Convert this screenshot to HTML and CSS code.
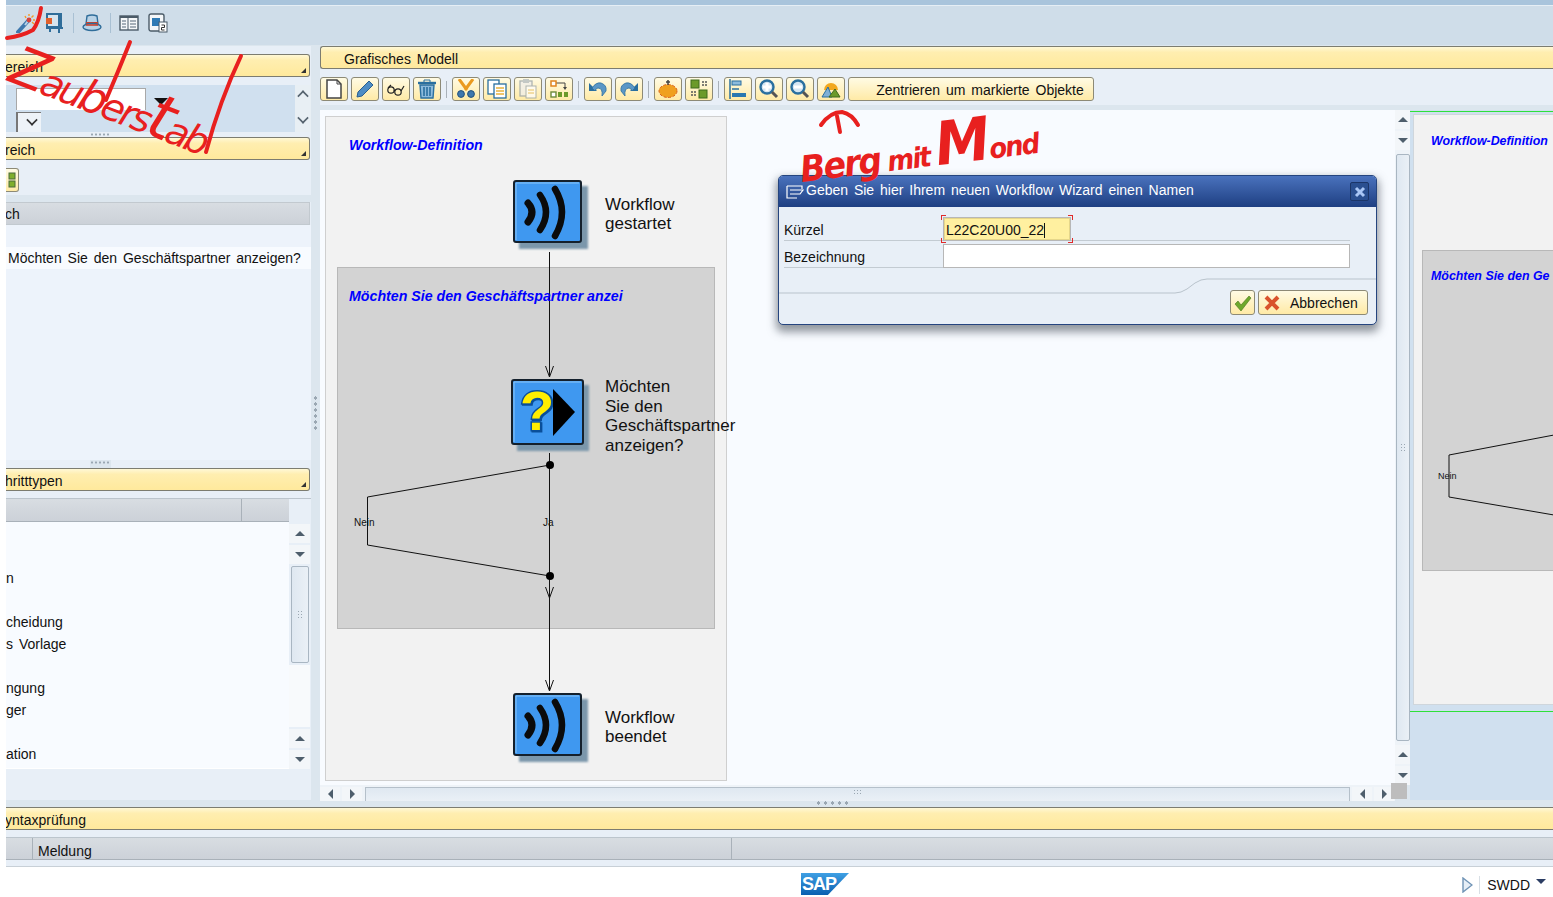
FILE: index.html
```html
<!DOCTYPE html>
<html lang="de">
<head>
    <meta charset="UTF-8">
    <title>SWDD</title>
    <link rel="stylesheet" href="styles.css">
</head>
<body>
<div class="app">
    <div class="top-strip"></div>

    <!-- System toolbar -->
    <div class="sys-toolbar">
        <svg class="sys-icon" viewBox="0 0 20 20"><path d="M2 19 L12 8" stroke="#3f78ad" stroke-width="4" stroke-linecap="round"/><path d="M9 12 L12 8" stroke="#b9d2e6" stroke-width="2"/><circle cx="13" cy="7" r="2.4" fill="#d8423a"/><path d="M13 1v2M19 7h-2M17.5 2.5l-2 2M18 11l-2-2M9 3l1 2" stroke="#f39a2a" stroke-width="1.4"/></svg>
        <svg class="sys-icon" viewBox="0 0 20 20"><rect x="2" y="1" width="14" height="13" fill="#d7e4ee" stroke="#2f6d9a" stroke-width="2"/><rect x="1" y="5" width="6" height="6" fill="#e0602c"/><path d="M1 15h17M14 1v19M5 15v4" stroke="#2f6d9a" stroke-width="2"/></svg>
        <span class="sys-sep"></span>
        <svg class="sys-icon" viewBox="0 0 20 20"><path d="M5 3 Q10 1 15 3 L16 11 H4Z" fill="#b9d2e6" stroke="#2f6d9a" stroke-width="1.4"/><path d="M4 9h12v2H4z" fill="#c9422f"/><ellipse cx="10" cy="14" rx="9" ry="3.5" fill="#b9d2e6" stroke="#2f6d9a" stroke-width="1.4"/><path d="M4 12h12" stroke="#c9422f" stroke-width="1.6"/></svg>
        <span class="sys-sep"></span>
        <svg class="sys-icon" viewBox="0 0 20 20"><rect x="1" y="3" width="18" height="14" fill="#f5f7f9" stroke="#4b5b68" stroke-width="1.4"/><path d="M1 4h18" stroke="#4b5b68" stroke-width="2"/><path d="M9 4v13" stroke="#4b5b68"/><path d="M3 8h4M3 11h4M3 14h4M11 8h6M11 11h6M11 14h6" stroke="#8a98a4" stroke-width="1.4"/></svg>
        <svg class="sys-icon" viewBox="0 0 20 20"><rect x="1" y="1" width="15" height="17" rx="2" fill="#f5f7f9" stroke="#4b5b68" stroke-width="1.4"/><rect x="4" y="5" width="8" height="8" fill="#2f7ab5"/><rect x="11" y="9" width="8" height="10" fill="#fff" stroke="#4b5b68"/><path d="M13.5 12h3v2.5h-3v2.5h3" fill="none" stroke="#333"/></svg>
    </div>

    <div class="workspace">
        <!-- Left column -->
        <div class="left-pane">
            <div class="ybar left-bar first-bar"><span class="clip-text">ereich</span><i class="corner"></i></div>
            <div class="filter-row">
                <div class="filter-fields">
                    <div class="filter-top"><span class="filter-input"></span><i class="tri-down"></i></div>
                    <span class="filter-drop"><i class="chev"></i></span>
                </div>
                <div class="filter-scroll"><i class="chev-up"></i><i class="chev"></i></div>
            </div>
            <div class="grip"></div>
            <div class="ybar left-bar"><span class="clip-text">reich</span><i class="corner"></i></div>
            <div class="btn-row">
                <span class="tool-btn narrow"><svg viewBox="0 0 12 20" width="12" height="20"><rect x="3" y="3" width="6" height="6" fill="#7fae2c" stroke="#4b6b3a"/><rect x="3" y="11" width="6" height="6" fill="#7fae2c" stroke="#4b6b3a"/></svg></span>
            </div>
            <div class="band-thin"></div>
            <div class="ghead left-head"><span class="clip-text">ch</span></div>
            <div class="tree">
                <div class="tree-row">Möchten Sie den Geschäftspartner anzeigen?</div>
            </div>
            <div class="grip grip-low"></div>
            <div class="ybar left-bar"><span class="clip-text">hritttypen</span><i class="corner"></i></div>
            <div class="steps">
                <div class="steps-main">
                    <div class="ghead steps-head"><span class="steps-col"></span></div>
                    <div class="steps-list">
                        <div class="step"></div>
                        <div class="step"></div>
                        <div class="step">n</div>
                        <div class="step"></div>
                        <div class="step">cheidung</div>
                        <div class="step">s Vorlage</div>
                        <div class="step"></div>
                        <div class="step">ngung</div>
                        <div class="step">ger</div>
                        <div class="step"></div>
                        <div class="step">ation</div>
                    </div>
                </div>
                <div class="vscroll steps-scroll">
                    <span class="sb"><i class="a-up"></i></span>
                    <span class="sb"><i class="a-down"></i></span>
                    <span class="thumb steps-thumb"><i class="thumb-dots"></i></span>
                    <span class="track"></span>
                    <span class="sb"><i class="a-up"></i></span>
                    <span class="sb"><i class="a-down"></i></span>
                </div>
            </div>
        </div>

        <div class="splitter"><i class="split-dots"></i></div>

        <!-- Graphical model -->
        <div class="right-pane">
            <div class="ybar model-bar">Grafisches Modell</div>
            <div class="model-toolbar">
                <span class="tool-btn"><svg viewBox="0 0 20 20"><path d="M3 1h10l4 4v14H3z" fill="#fff" stroke="#444" stroke-width="1.5"/><path d="M13 1v4h4" fill="none" stroke="#444"/></svg></span>
                <span class="tool-btn"><svg viewBox="0 0 20 20"><path d="M14 2l4 4L7 17l-5 1 1-5z" fill="#4d8cc4" stroke="#2a5f8f"/></svg></span>
                <span class="tool-btn"><svg viewBox="0 0 20 20"><circle cx="5" cy="11" r="3.2" fill="none" stroke="#222" stroke-width="1.2"/><circle cx="12" cy="13" r="3.2" fill="none" stroke="#222" stroke-width="1.2"/><path d="M8 11l1 1M15 12l3-5M2 9l3-3" fill="none" stroke="#222" stroke-width="1.2"/></svg></span>
                <span class="tool-btn"><svg viewBox="0 0 20 20"><path d="M1 4h18" stroke="#2a6f9f" stroke-width="2.4"/><path d="M7 3V1h6v2" fill="none" stroke="#2a6f9f"/><path d="M3 6h14l-1 13H4z" fill="#8dbbdc" stroke="#2a6f9f" stroke-width="1.4"/><path d="M7 8v9M10 8v9M13 8v9" stroke="#2a6f9f" stroke-width="1.6"/></svg></span>
                <span class="tool-sep"></span>
                <span class="tool-btn"><svg viewBox="0 0 20 20"><path d="M3 0l8 11M17 0L9 11" stroke="#eb9a1f" stroke-width="3"/><circle cx="5" cy="15" r="3.4" fill="#3f78ad" stroke="#24527c"/><circle cx="15" cy="15" r="3.4" fill="#3f78ad" stroke="#24527c"/></svg></span>
                <span class="tool-btn"><svg viewBox="0 0 20 20"><rect x="1" y="1" width="11" height="14" fill="#fff" stroke="#2a6f9f" stroke-width="1.3"/><rect x="7" y="5" width="12" height="14" fill="#fff" stroke="#2a6f9f" stroke-width="1.3"/><path d="M9 9h8M9 12h8M9 15h8" stroke="#e9b33c" stroke-width="1.3"/></svg></span>
                <span class="tool-btn faded"><svg viewBox="0 0 20 20"><rect x="2" y="2" width="12" height="15" fill="#eee" stroke="#8c99a3" stroke-width="1.3"/><rect x="5" y="0" width="6" height="4" fill="#aab5bd"/><rect x="8" y="7" width="10" height="12" fill="#fff" stroke="#8c99a3"/><path d="M10 11h6M10 14h6" stroke="#e9c97c" stroke-width="1.3"/></svg></span>
                <span class="tool-btn"><svg viewBox="0 0 20 20"><path d="M7 4h9v4" fill="none" stroke="#444"/><path d="M14 8l2 3 2-3z" fill="#444"/><rect x="2" y="2" width="5" height="5" fill="#fff" stroke="#e0841e" stroke-width="1.5"/><rect x="2" y="13" width="5" height="5" fill="#fff" stroke="#6c8a3a" stroke-width="1.4"/><rect x="9" y="13" width="4" height="5" fill="#6c9a2a"/><rect x="15" y="13" width="4" height="5" fill="#6c9a2a"/></svg></span>
                <span class="tool-sep"></span>
                <span class="tool-btn"><svg viewBox="0 0 20 20"><path d="M1 4v8h8z" fill="#2a6f9f"/><path d="M4 9 Q8 3 13 4 Q19 6 18 12 L14 17 Q15 9 10 9 Q8 9 7 12z" fill="#5b97c6" stroke="#2a6f9f" stroke-width=".8"/></svg></span>
                <span class="tool-btn"><svg viewBox="0 0 20 20"><path d="M19 4v8h-8z" fill="#2a6f9f"/><path d="M16 9 Q12 3 7 4 Q1 6 2 12 L6 17 Q5 9 10 9 Q12 9 13 12z" fill="#5b97c6" stroke="#2a6f9f" stroke-width=".8"/></svg></span>
                <span class="tool-sep"></span>
                <span class="tool-btn"><svg viewBox="0 0 20 20"><ellipse cx="10" cy="12" rx="9" ry="6.5" fill="#f0a01e" stroke="#d9601c" stroke-dasharray="3 1.5"/><path d="M10 1v5M8 3h4" stroke="#444" stroke-width="1.5"/></svg></span>
                <span class="tool-btn"><svg viewBox="0 0 20 20"><rect x="2" y="1" width="8" height="8" fill="#6c9a2a" stroke="#3f6a1c"/><rect x="10" y="11" width="8" height="8" fill="#6c9a2a" stroke="#3f6a1c"/><path d="M13 3h5M13 6h5M2 13h5M2 16h5" stroke="#555" stroke-width="1.3" stroke-dasharray="2 1"/></svg></span>
                <span class="tool-sep"></span>
                <span class="tool-btn"><svg viewBox="0 0 20 20"><path d="M2 0v20" stroke="#2a6f9f" stroke-width="1.5"/><rect x="4" y="2" width="9" height="4" fill="#8dbbdc" stroke="#2a6f9f"/><path d="M4 10h7" stroke="#2a6f9f" stroke-width="1.5"/><rect x="4" y="14" width="14" height="4" fill="#2a78b0"/></svg></span>
                <span class="tool-btn"><svg viewBox="0 0 20 20"><circle cx="8" cy="8" r="6.5" fill="#d5e6f3" stroke="#2a6f9f" stroke-width="2.4"/><path d="M4 8h8M8 4v8" stroke="#fff" stroke-width="3"/><path d="M13 13l5 5" stroke="#555" stroke-width="3"/></svg></span>
                <span class="tool-btn"><svg viewBox="0 0 20 20"><circle cx="8" cy="8" r="6.5" fill="#d5e6f3" stroke="#2a6f9f" stroke-width="2.4"/><path d="M4 8h8" stroke="#fff" stroke-width="3"/><path d="M13 13l5 5" stroke="#555" stroke-width="3"/></svg></span>
                <span class="tool-btn"><svg viewBox="0 0 20 20"><path d="M3 11a7 7 0 0 1 14 0z" fill="#f2a81e"/><path d="M1 18l6-10 4 10z" fill="#7fb0d6" stroke="#2a6f9f"/><path d="M8 18l6-8 5 8z" fill="#6c9a2a" stroke="#3f6a1c"/></svg></span>
                <span class="tool-btn text-btn">Zentrieren um markierte Objekte</span>
            </div>
            <div class="band"></div>

            <div class="model-body">
                <div class="canvas-col">
                    <div class="canvas">
                        <div class="diagram">
                            <div class="loop-box"></div>
                            <svg class="diagram-lines" viewBox="325 116 402 665">
                                <defs>
                                    <g id="sound-node">
                                        <rect class="node-shadow" x="6" y="6" width="69" height="63"/>
                                        <rect x="1" y="1" width="67" height="61" rx="2" fill="#3f98f0" stroke="#14202c" stroke-width="2"/>
                                        <path d="M3 3h63M3 3v57" stroke="#8cc6f7"/>
                                        <path d="M15 23 Q23 32 15 42" fill="none" stroke="#0b0b0b" stroke-width="7" stroke-linecap="round"/>
                                        <path d="M27 15 Q39 32 27 50" fill="none" stroke="#0b0b0b" stroke-width="6.500" stroke-linecap="round"/>
                                        <path d="M42 9 Q56 32 42 56" fill="none" stroke="#0b0b0b" stroke-width="6.500" stroke-linecap="round"/>
                                    </g>
                                    <path id="head" d="M-4 -11 L0 0 L4 -11" fill="none" stroke="#111"/>
                                </defs>
                                <path d="M549.500 252V377M549.500 453V690" stroke="#111" fill="none"/>
                                <path d="M550 465L367.500 497V545L550 576" stroke="#111" fill="none"/>
                                <use href="#head" x="549.500" y="377"/>
                                <use href="#head" x="549.500" y="598"/>
                                <use href="#head" x="549.500" y="691"/>
                                <circle cx="550" cy="465" r="4" fill="#000"/>
                                <circle cx="550" cy="576" r="4" fill="#000"/>
                                <use href="#sound-node" x="513" y="180"/>
                                <use href="#sound-node" x="513" y="693"/>
                                <g transform="translate(511 379)">
                                    <rect class="node-shadow" x="6" y="6" width="72" height="66"/>
                                    <rect x="1" y="1" width="71" height="64" rx="2" fill="#3f98f0" stroke="#14202c" stroke-width="2"/>
                                    <path d="M3 3h67M3 3v60" stroke="#8cc6f7"/>
                                    <text class="quest" x="9" y="51">?</text>
                                    <path d="M42 10 L64 33 L42 57Z" fill="#000"/>
                                </g>
                            </svg>
                            <div class="def-title">Workflow-Definition</div>
                            <div class="loop-title">Möchten Sie den Geschäftspartner anzei</div>
                            <div class="node-label label-start">Workflow<br>gestartet</div>
                            <div class="node-label label-ask">Möchten<br>Sie den<br>Geschäftspartner<br>anzeigen?</div>
                            <div class="node-label label-end">Workflow<br>beendet</div>
                            <div class="tiny label-no">Nein</div>
                            <div class="tiny label-yes">Ja</div>
                        </div>

                        <!-- Name dialog -->
                        <div class="dialog">
                            <div class="dialog-title">
                                <svg class="dialog-icon" viewBox="0 0 18 14"><path d="M1 1h15v3M1 1v12h10M4 5h13l-3 4H4" fill="none" stroke="#fff" stroke-width="1.2"/></svg>
                                <span class="dialog-caption">Geben Sie hier Ihrem neuen Workflow Wizard einen Namen</span>
                                <span class="dialog-close"><svg viewBox="0 0 12 12" width="12" height="12"><path d="M2 2l8 8M10 2l-8 8" stroke="#a9c6f5" stroke-width="3"/></svg></span>
                            </div>
                            <div class="dialog-form">
                                <div class="form-row">
                                    <span class="form-label">Kürzel</span>
                                    <span class="form-input active">L22C20U00_22<i class="caret"></i>
                                        <i class="mark m-tl"></i><i class="mark m-tr"></i><i class="mark m-bl"></i><i class="mark m-br"></i>
                                    </span>
                                </div>
                                <div class="form-row">
                                    <span class="form-label">Bezeichnung</span>
                                    <span class="form-input wide"></span>
                                </div>
                            </div>
                            <div class="dialog-foot">
                                <svg class="foot-line" viewBox="0 0 598 16" preserveAspectRatio="none"><path d="M0 15H396 Q402 15 408 11 L416 5 Q422 1 428 1H598" fill="none" stroke="#b9c3cc"/></svg>
                                <span class="tool-btn dlg-ok"><svg viewBox="0 0 20 20"><path d="M2 11l3-3 3 4 8-9 2 2-10 13z" fill="#6ea92c" stroke="#47761a" stroke-width=".6"/></svg></span>
                                <span class="tool-btn dlg-cancel"><svg viewBox="0 0 20 20"><path d="M4 4l12 12M16 4L4 16" stroke="#d9532c" stroke-width="4"/></svg>Abbrechen</span>
                            </div>
                        </div>
                    </div>
                    <div class="hscroll">
                        <span class="sb-h"><i class="a-left"></i></span>
                        <span class="sb-h"><i class="a-right"></i></span>
                        <span class="thumb-h"><i class="thumb-dots-h"></i></span>
                        <span class="sb-h"><i class="a-left"></i></span>
                        <span class="sb-h"><i class="a-right"></i></span>
                        <span class="corner-box"></span>
                    </div>
                </div>
                <div class="vscroll model-scroll">
                    <span class="sb"><i class="a-up"></i></span>
                    <span class="sb"><i class="a-down"></i></span>
                    <span class="thumb model-thumb"><i class="thumb-dots"></i></span>
                    <span class="sb"><i class="a-up"></i></span>
                    <span class="sb"><i class="a-down"></i></span>
                </div>
                <div class="overview">
                    <div class="overview-sheet">
                        <div class="ov-box"></div>
                        <svg class="ov-lines" viewBox="0 0 140 590"><path d="M140 320L35 340V382L140 400" fill="none" stroke="#111"/></svg>
                        <div class="ov-def">Workflow-Definition</div>
                        <div class="ov-loop">Möchten Sie den Ge</div>
                        <div class="tiny ov-no">Nein</div>
                    </div>
                </div>
            </div>
        </div>
    </div>

    <!-- Syntax check -->
    <div class="band-bottom"><i class="grip-h"></i></div>
    <div class="ybar syntax-bar"><span class="clip-text">yntaxprüfung</span></div>
    <div class="syntax-gap"></div>
    <div class="ghead syntax-head"><span class="col-a"></span><span class="col-b">Meldung</span></div>
    <div class="syntax-end"></div>

    <!-- Status bar -->
    <div class="status">
        <div class="sap-logo"><span class="sap-text">SAP</span></div>
        <div class="status-right">
            <svg class="status-play" viewBox="0 0 11 16"><path d="M1 1l9 7-9 7z" fill="#e6eef6" stroke="#6f93b5" stroke-width="1.4"/></svg>
            <span class="status-sep"></span>
            <span class="status-code">SWDD</span>
            <i class="status-arrow"></i>
        </div>
    </div>
</div>

<!-- Red pen notes on top of the screenshot -->
<svg class="pen-layer" viewBox="0 0 1553 897">
    <path d="M41 8 Q39 22 33 30 Q22 36 7 38" />
    <path d="M821 125 Q830 112 842 112 Q852 114 858 125 M837 116 L840 132" />
    <path d="M130 42 Q118 72 106 100" />
    <path d="M241 56 Q220 100 206 152" />
</svg>
<div class="pen pen-zauber"><span class="p-z">Z</span>au<span class="p-mid">b</span>ers<span class="p-t">t</span>ab</div>
<div class="pen pen-berg"><span class="p-bb">Berg</span> mit <span class="p-mm">M</span>ond</div>
</body>
</html>
```

FILE: styles.css
```css
* {
    box-sizing: border-box;
}

body {
    margin: 0;
    width: 1553px;
    height: 897px;
    overflow: hidden;
    background-color: #fff;
    font-family: "Liberation Sans", Arial, sans-serif;
    font-size: 14px;
    word-spacing: 2px;
    color: #111;
    position: relative;
}

.app {
    margin-left: 6px;
    height: 897px;
    display: flex;
    flex-direction: column;
    overflow: hidden;
}

.top-strip {
    height: 6px;
    background-color: #a9c4dc;
    border-bottom: 1px solid #e6eef5;
}

/* toolbar at the very top */
.sys-toolbar {
    height: 39px;
    background-color: #cfdde9;
    display: flex;
    align-items: center;
    gap: 9px;
    padding-left: 10px;
    padding-bottom: 6px;
}

.sys-icon {
    width: 20px;
    height: 20px;
}

.sys-sep {
    width: 1px;
    height: 20px;
    margin: 0 -1px;
    background-color: #a9c0d3;
}

.workspace {
    height: 755px;
    display: flex;
    background-color: #dce6ee;
}

/* yellow title bars */
.ybar {
    position: relative;
    height: 23px;
    line-height: 24px;
    background: linear-gradient(#fff8d6 0, #ffeeb0 25%, #ffe99c 100%);
    border: 1px solid #7c7c70;
    overflow: hidden;
    white-space: nowrap;
}

.left-bar {
    width: 304px;
    border-left: 0;
    border-radius: 0 3px 3px 0;
    flex: none;
}

.corner {
    position: absolute;
    right: 3px;
    bottom: 3px;
    border-style: solid;
    border-width: 0 0 5px 5px;
    border-color: transparent transparent #333 transparent;
}

.clip-text {
    margin-left: -1px;
}

.ghead {
    background: linear-gradient(#d8dde2, #ccd1d8);
    border-bottom: 1px solid #a9b1b9;
    height: 23px;
    line-height: 22px;
    overflow: hidden;
}

/* left column */
.left-pane {
    width: 305px;
    flex: none;
    margin-top: 1px;
    background-color: #e8eff7;
    display: flex;
    flex-direction: column;
    padding-top: 8px;
}

.filter-row {
    height: 47px;
    margin-top: 8px;
    display: flex;
    justify-content: space-between;
    background-color: #d0e0ef;
}

.filter-fields {
    padding: 3px 0 0 10px;
}

.filter-top {
    display: flex;
    align-items: center;
    gap: 8px;
}

.filter-input {
    display: block;
    width: 130px;
    height: 22px;
    background-color: #fff;
    border: 1px solid #a8a8a8;
    border-bottom: 0;
}

.tri-down {
    margin-top: 4px;
    border-style: solid;
    border-width: 7px 7px 0 7px;
    border-color: #111 transparent transparent transparent;
}

.filter-drop {
    display: block;
    margin-top: 2px;
    width: 25px;
    height: 20px;
    padding: 2px 0 0 6px;
    border-left: 2px solid #777;
    border-top: 1px solid #777;
    background-color: #eef3f8;
}

.chev, .chev-up {
    display: block;
    width: 10px;
    height: 10px;
    border-right: 2px solid #333;
    border-bottom: 2px solid #333;
    transform: rotate(45deg) scale(.8);
}

.chev-up {
    transform: rotate(225deg) scale(.8);
    margin-bottom: 12px;
    margin-top: 6px;
}

.filter-drop .chev {
    margin-left: 3px;
}

.filter-scroll {
    width: 16px;
    background-color: #e8eff4;
    padding-left: 3px;
}

.filter-scroll .chev, .filter-scroll .chev-up {
    border-color: #55636f;
}

.grip {
    height: 5px;
    margin-bottom: 0;
    background: radial-gradient(circle, #9aa7b2 1px, transparent 1.2px) 84px 0 / 4px 5px repeat-x;
    background-clip: content-box;
    padding: 0 200px 0 84px;
}

.btn-row {
    height: 35px;
    padding-top: 8px;
    background-color: #e8eff7;
    flex: none;
}

.band-thin {
    height: 7px;
    flex: none;
    background-color: #dce6ee;
}

.left-head {
    flex: none;
    width: 304px;
    border: 1px solid #c2c9cf;
    border-left: 0;
}

.tree {
    height: 235px;
    flex: none;
    background-color: #edf3fb;
    padding-top: 22px;
}

.tree-row {
    height: 22px;
    line-height: 23px;
    padding-left: 2px;
    background-color: #f8fbff;
    white-space: nowrap;
}

.grip-low {
    flex: none;
    height: 8px;
    background-color: #dce6ee;
}

.steps {
    flex: 1;
    display: flex;
    margin-top: 7px;
    border-top: 1px solid #bcc5cd;
    min-height: 0;
}

.steps-main {
    width: 283px;
    display: flex;
    flex-direction: column;
    background-color: #e8eff7;
}

.steps-head {
    flex: none;
    height: 23px;
    display: flex;
    justify-content: flex-end;
}

.steps-col {
    width: 48px;
    border-left: 1px solid #a9b1b9;
}

.steps-list {
    height: 247px;
    padding-top: 1px;
    background-color: #f8fbff;
    border-bottom: 1px solid #fff;
}

.step {
    height: 22px;
    line-height: 22px;
    white-space: nowrap;
}

/* scrollbars */
.vscroll {
    display: flex;
    flex-direction: column;
    align-items: center;
    gap: 2px;
    flex: none;
}

.steps-scroll {
    width: 21px;
    padding-top: 25px;
    padding-bottom: 10px;
    background-color: #e8eff7;
}

.sb {
    display: flex;
    align-items: center;
    justify-content: center;
    flex: none;
    width: 100%;
    height: 19px;
    background-color: #f3f6f9;
}

.a-up, .a-down, .a-left, .a-right {
    display: block;
    border-style: solid;
}

.a-up {
    border-width: 0 5px 5px 5px;
    border-color: transparent transparent #4e5e6c transparent;
}

.a-down {
    border-width: 5px 5px 0 5px;
    border-color: #4e5e6c transparent transparent transparent;
}

.a-left {
    border-width: 5px 5px 5px 0;
    border-color: transparent #4e5e6c transparent transparent;
}

.a-right {
    border-width: 5px 0 5px 5px;
    border-color: transparent transparent transparent #4e5e6c;
}

.thumb {
    display: flex;
    align-items: center;
    justify-content: center;
    width: 18px;
    flex: none;
    background: linear-gradient(90deg, #dfe8f1, #eaf0f6);
    border: 1px solid #a9b6c2;
    border-radius: 2px;
}

.steps-thumb {
    height: 97px;
}

.thumb-dots {
    width: 6px;
    height: 9px;
    background: radial-gradient(circle, #9aa7b2 .8px, transparent 1px) 0 0 / 3px 3px;
}

.track {
    flex: none;
    width: 100%;
    height: 62px;
    background-color: #f8fafc;
}

.splitter {
    width: 9px;
    flex: none;
    display: flex;
    align-items: center;
    justify-content: center;
    padding-bottom: 20px;
    background-color: #dce6ee;
}

.split-dots {
    width: 5px;
    height: 36px;
    background: radial-gradient(circle, #9aa7b2 1.6px, transparent 1.8px) 0 0 / 5px 6px;
}

/* model pane */
.right-pane {
    flex: 1;
    min-width: 0;
    margin-top: 1px;
    display: flex;
    flex-direction: column;
}

.model-bar {
    flex: none;
    border-right: 0;
    border-radius: 3px 0 0 3px;
    padding-left: 23px;
}

.model-toolbar {
    flex: none;
    height: 36px;
    display: flex;
    align-items: flex-start;
    gap: 3px;
    padding-top: 8px;
    background-color: #e8eff7;
}

.tool-btn {
    display: flex;
    align-items: center;
    justify-content: center;
    flex: none;
    width: 28px;
    height: 24px;
    background: linear-gradient(#fffbe4, #ffeaa6);
    border: 1px solid #8d8a76;
    border-radius: 3px;
}

.tool-btn svg {
    width: 20px;
    height: 20px;
    flex: none;
}

.tool-btn.narrow {
    width: 13px;
    border-left: 0;
    border-radius: 0 3px 3px 0;
}

.tool-btn.faded svg {
    opacity: .7;
}

.tool-sep {
    width: 1px;
    height: 17px;
    flex: none;
    margin: 4px 2px 0;
    background-color: #a9b1b9;
}

.text-btn {
    width: 246px;
    padding-left: 18px;
    padding-top: 1px;
    white-space: nowrap;
}

.band {
    flex: none;
    height: 5px;
    background-color: #dce6ee;
}

.model-body {
    flex: 1;
    min-height: 0;
    display: flex;
}

.canvas-col {
    width: 1075px;
    flex: none;
    display: flex;
    flex-direction: column;
}

.canvas {
    position: relative;
    height: 675px;
    flex: none;
    background-color: #f8fbff;
}

.diagram {
    position: absolute;
    left: 5px;
    top: 6px;
    width: 402px;
    height: 665px;
    background-color: #f2f2f2;
    border: 1px solid #cfcfcf;
    word-spacing: 0;
}

.loop-box {
    position: absolute;
    left: 11px;
    top: 150px;
    width: 378px;
    height: 362px;
    background-color: #d3d3d3;
    border: 1px solid #b8b8b8;
}

.diagram-lines {
    position: absolute;
    left: -1px;
    top: -1px;
    width: 402px;
    height: 665px;
    overflow: visible;
}

.node-shadow {
    fill: #7b97ab;
    filter: blur(1px);
}

.quest {
    font: bold 56px "Liberation Sans", Arial, sans-serif;
    fill: #ffee00;
    stroke: #0a4f9a;
    stroke-width: 3px;
    paint-order: stroke;
    filter: drop-shadow(1px 1px 0 #0a4f9a);
}

.def-title, .loop-title {
    position: absolute;
    left: 23px;
    top: 19px;
    font-weight: bold;
    font-style: italic;
    font-size: 14.200px;
    color: #0000ff;
    white-space: nowrap;
}

.loop-title {
    top: 171px;
}

.def-title {
    top: 20px;
}

.node-label {
    position: absolute;
    left: 279px;
    font-size: 17px;
    line-height: 19px;
    white-space: nowrap;
}

.label-start {
    top: 78px;
}

.label-ask {
    top: 260px;
    line-height: 19.500px;
}

.label-end {
    top: 591px;
}

.tiny {
    position: absolute;
    font-size: 10px;
    line-height: 12px;
    word-spacing: 0;
}

.label-no {
    left: 28px;
    top: 400px;
}

.label-yes {
    left: 217px;
    top: 400px;
}

/* dialog */
.dialog {
    position: absolute;
    left: 458px;
    top: 65px;
    width: 599px;
    height: 150px;
    background-color: #e8eff7;
    border: 1px solid #25457f;
    border-radius: 5px;
    box-shadow: 0 5px 8px 2px rgba(60, 70, 80, .55);
    overflow: hidden;
}

.dialog-title {
    height: 31px;
    display: flex;
    align-items: center;
    padding: 0 7px 0 7px;
    background: linear-gradient(#4a72bd, #1e3f82);
    color: #fff;
}

.dialog-icon {
    width: 18px;
    height: 14px;
    margin-right: 3px;
}

.dialog-caption {
    flex: 1;
    padding-bottom: 4px;
    margin-left: -1px;
    white-space: nowrap;
}

.dialog-close {
    display: flex;
    align-items: center;
    justify-content: center;
    width: 19px;
    height: 19px;
    background-color: #2a4f90;
    border: 1px solid #1b3568;
    border-radius: 2px;
}

.dialog-form {
    padding: 10px 26px 0 5px;
}

.form-row {
    display: flex;
    align-items: center;
    height: 24px;
    margin-bottom: 3px;
    border-bottom: 1px solid #c3cbd2;
}

.form-row + .form-row {
    margin-bottom: 0;
}

.form-label {
    width: 159px;
    flex: none;
    padding-top: 3px;
    white-space: nowrap;
}

.form-input {
    position: relative;
    display: block;
    height: 24px;
    line-height: 24px;
    padding-left: 2px;
    background-color: #fff;
    border: 1px solid #b7b7b7;
    word-spacing: 0;
}

.form-input.active {
    width: 128px;
    background-color: #fff0a0;
    box-shadow: inset 0 0 0 1px #e5d68a;
}

.form-input.wide {
    width: 408px;
}

.caret {
    display: inline-block;
    width: 1px;
    height: 15px;
    vertical-align: -3px;
    background-color: #111;
}

.mark {
    position: absolute;
    width: 5px;
    height: 5px;
    border: 0 solid #e02a2a;
}

.m-tl {
    left: -3px;
    top: -3px;
    border-width: 1px 0 0 1px;
}

.m-tr {
    right: -3px;
    top: -3px;
    border-width: 1px 1px 0 0;
}

.m-bl {
    left: -3px;
    bottom: -3px;
    border-width: 0 0 1px 1px;
}

.m-br {
    right: -3px;
    bottom: -3px;
    border-width: 0 1px 1px 0;
}

.dialog-foot {
    position: relative;
    display: flex;
    justify-content: flex-end;
    gap: 3px;
    padding: 12px 8px 0 0;
    margin-top: 10px;
}

.foot-line {
    position: absolute;
    left: 0;
    top: 0;
    width: 598px;
    height: 16px;
}

.dlg-ok {
    position: relative;
    width: 25px;
    height: 25px;
}

.dlg-cancel {
    position: relative;
    width: 110px;
    height: 25px;
    gap: 8px;
    line-height: 26px;
    justify-content: flex-start;
    padding-left: 3px;
}

/* model scrollbars */
.hscroll {
    position: relative;
    flex: 1;
    display: flex;
    gap: 2px;
    padding-top: 2px;
    background-color: #eef3f8;
}

.sb-h {
    display: flex;
    align-items: center;
    justify-content: center;
    width: 20px;
    height: 14px;
    background-color: #f3f6f9;
    flex: none;
}

.thumb-h {
    display: flex;
    justify-content: center;
    width: 985px;
    height: 14px;
    margin: 0 0 0 1px;
    background: linear-gradient(#dfe8f1, #eaf0f6);
    border: 1px solid #b5c0ca;
    border-bottom: 0;
    flex: none;
}

.thumb-dots-h {
    width: 9px;
    height: 6px;
    margin-top: 1px;
    background: radial-gradient(circle, #9aa7b2 .8px, transparent 1px) 0 0 / 3px 3px;
}

.corner-box {
    position: absolute;
    right: -12px;
    top: -2px;
    width: 16px;
    height: 16px;
    background-color: #bdbdbd;
}

.model-scroll {
    width: 15px;
    background-color: #eef3f8;
    height: 675px;
}

.model-thumb {
    width: 14px;
    height: 587px;
    margin: 2px 0;
}

.overview {
    flex: 1;
    min-width: 0;
    padding: 4px 0 0 3px;
    background-color: #d0e0ef;
    border-top: 0;
    position: relative;
}

.overview::before {
    content: "";
    position: absolute;
    left: 0;
    right: 0;
    top: 1px;
    height: 1px;
    background-color: #2fe03a;
}

.overview::after {
    content: "";
    position: absolute;
    left: 0;
    right: 0;
    top: 601px;
    height: 1px;
    background-color: #2fe03a;
}

.overview-sheet {
    position: relative;
    height: 591px;
    overflow: hidden;
    background-color: #f2f2f2;
    border: 1px solid #cfd6dc;
    border-right: 0;
    word-spacing: 0;
}

.ov-box {
    position: absolute;
    left: 8px;
    top: 135px;
    width: 140px;
    height: 321px;
    background-color: #d3d3d3;
    border: 1px solid #b8b8b8;
}

.ov-lines {
    position: absolute;
    left: 0;
    top: 0;
    width: 140px;
    height: 590px;
}

.ov-def, .ov-loop {
    position: absolute;
    left: 17px;
    font-weight: bold;
    font-style: italic;
    font-size: 12.400px;
    color: #0000ff;
    white-space: nowrap;
}

.ov-def {
    top: 19px;
}

.ov-loop {
    top: 154px;
}

.ov-no {
    left: 24px;
    top: 355px;
    font-size: 9px;
}

/* bottom part */
.band-bottom {
    flex: none;
    height: 7px;
    display: flex;
    justify-content: center;
    padding: 1px 0 0 106px;
    background-color: #dce6ee;
}

.grip-h {
    width: 36px;
    height: 4px;
    background: radial-gradient(circle, #9aa7b2 1.5px, transparent 1.7px) 0 0 / 7px 4px;
}

.syntax-bar {
    flex: none;
    border-left: 0;
    border-right: 0;
}

.syntax-gap {
    flex: none;
    height: 8px;
    background-color: #e8eff7;
    border-bottom: 1px solid #bcc5cd;
}

.syntax-head {
    flex: none;
    height: 22px;
    line-height: 26px;
    display: flex;
}

.col-a {
    width: 27px;
    border-right: 1px solid #a9b1b9;
}

.col-b {
    width: 699px;
    padding-left: 5px;
    border-right: 1px solid #a9b1b9;
}

.syntax-end {
    flex: none;
    height: 7px;
    background-color: #e8eff7;
    border-bottom: 1px solid #c8d0d7;
}

.status {
    flex: 1;
    position: relative;
    display: flex;
    justify-content: flex-end;
    align-items: center;
    background-color: #fff;
    padding-right: 7px;
}

.sap-logo {
    position: absolute;
    left: 795px;
    top: 6px;
    width: 48px;
    height: 22px;
    background: linear-gradient(#3fa0e4, #0a5fb0);
    clip-path: polygon(0 0, 100% 0, 56% 100%, 0 100%);
}

.sap-text {
    display: block;
    padding-left: 1px;
    line-height: 22px;
    font-size: 18px;
    font-weight: bold;
    letter-spacing: -1px;
    color: #fff;
}

.status-right {
    display: flex;
    align-items: center;
    margin-top: 5px;
}

.status-play {
    width: 11px;
    height: 16px;
    margin-right: 6px;
}

.status-sep {
    width: 1px;
    height: 18px;
    margin-right: 7px;
    background-color: #d8dfe5;
}

.status-code {
    margin-right: 6px;
}

.status-arrow {
    display: block;
    margin-top: -6px;
    border-style: solid;
    border-width: 5px 5px 0 5px;
    border-color: #2b3d63 transparent transparent transparent;
}

/* red pen notes */
.pen-layer {
    position: absolute;
    left: 0;
    top: 0;
    width: 1553px;
    height: 897px;
    pointer-events: none;
}

.pen-layer path {
    fill: none;
    stroke: #e8201f;
    stroke-width: 4;
    stroke-linecap: round;
}

.pen {
    position: absolute;
    color: #e8201f;
    white-space: nowrap;
    font-family: "DejaVu Sans", sans-serif;
    font-style: italic;
    word-spacing: 0;
}

.pen-zauber {
    left: 14px;
    top: 24px;
    font-size: 38px;
    letter-spacing: -3.500px;
    transform: rotate(21deg);
    transform-origin: 0 50%;
}

.p-z {
    font-size: 54px;
}

.p-mid {
    font-size: 44px;
}

.p-t {
    font-size: 62px;
}

.pen-berg {
    left: 800px;
    top: 146px;
    font-size: 28px;
    font-weight: bold;
    letter-spacing: -2px;
    transform: rotate(-7deg) scaleX(.92);
    transform-origin: 0 50%;
}

.p-bb {
    font-size: 36px;
}

.p-mm {
    font-size: 60px;
    line-height: 30px;
}
```
